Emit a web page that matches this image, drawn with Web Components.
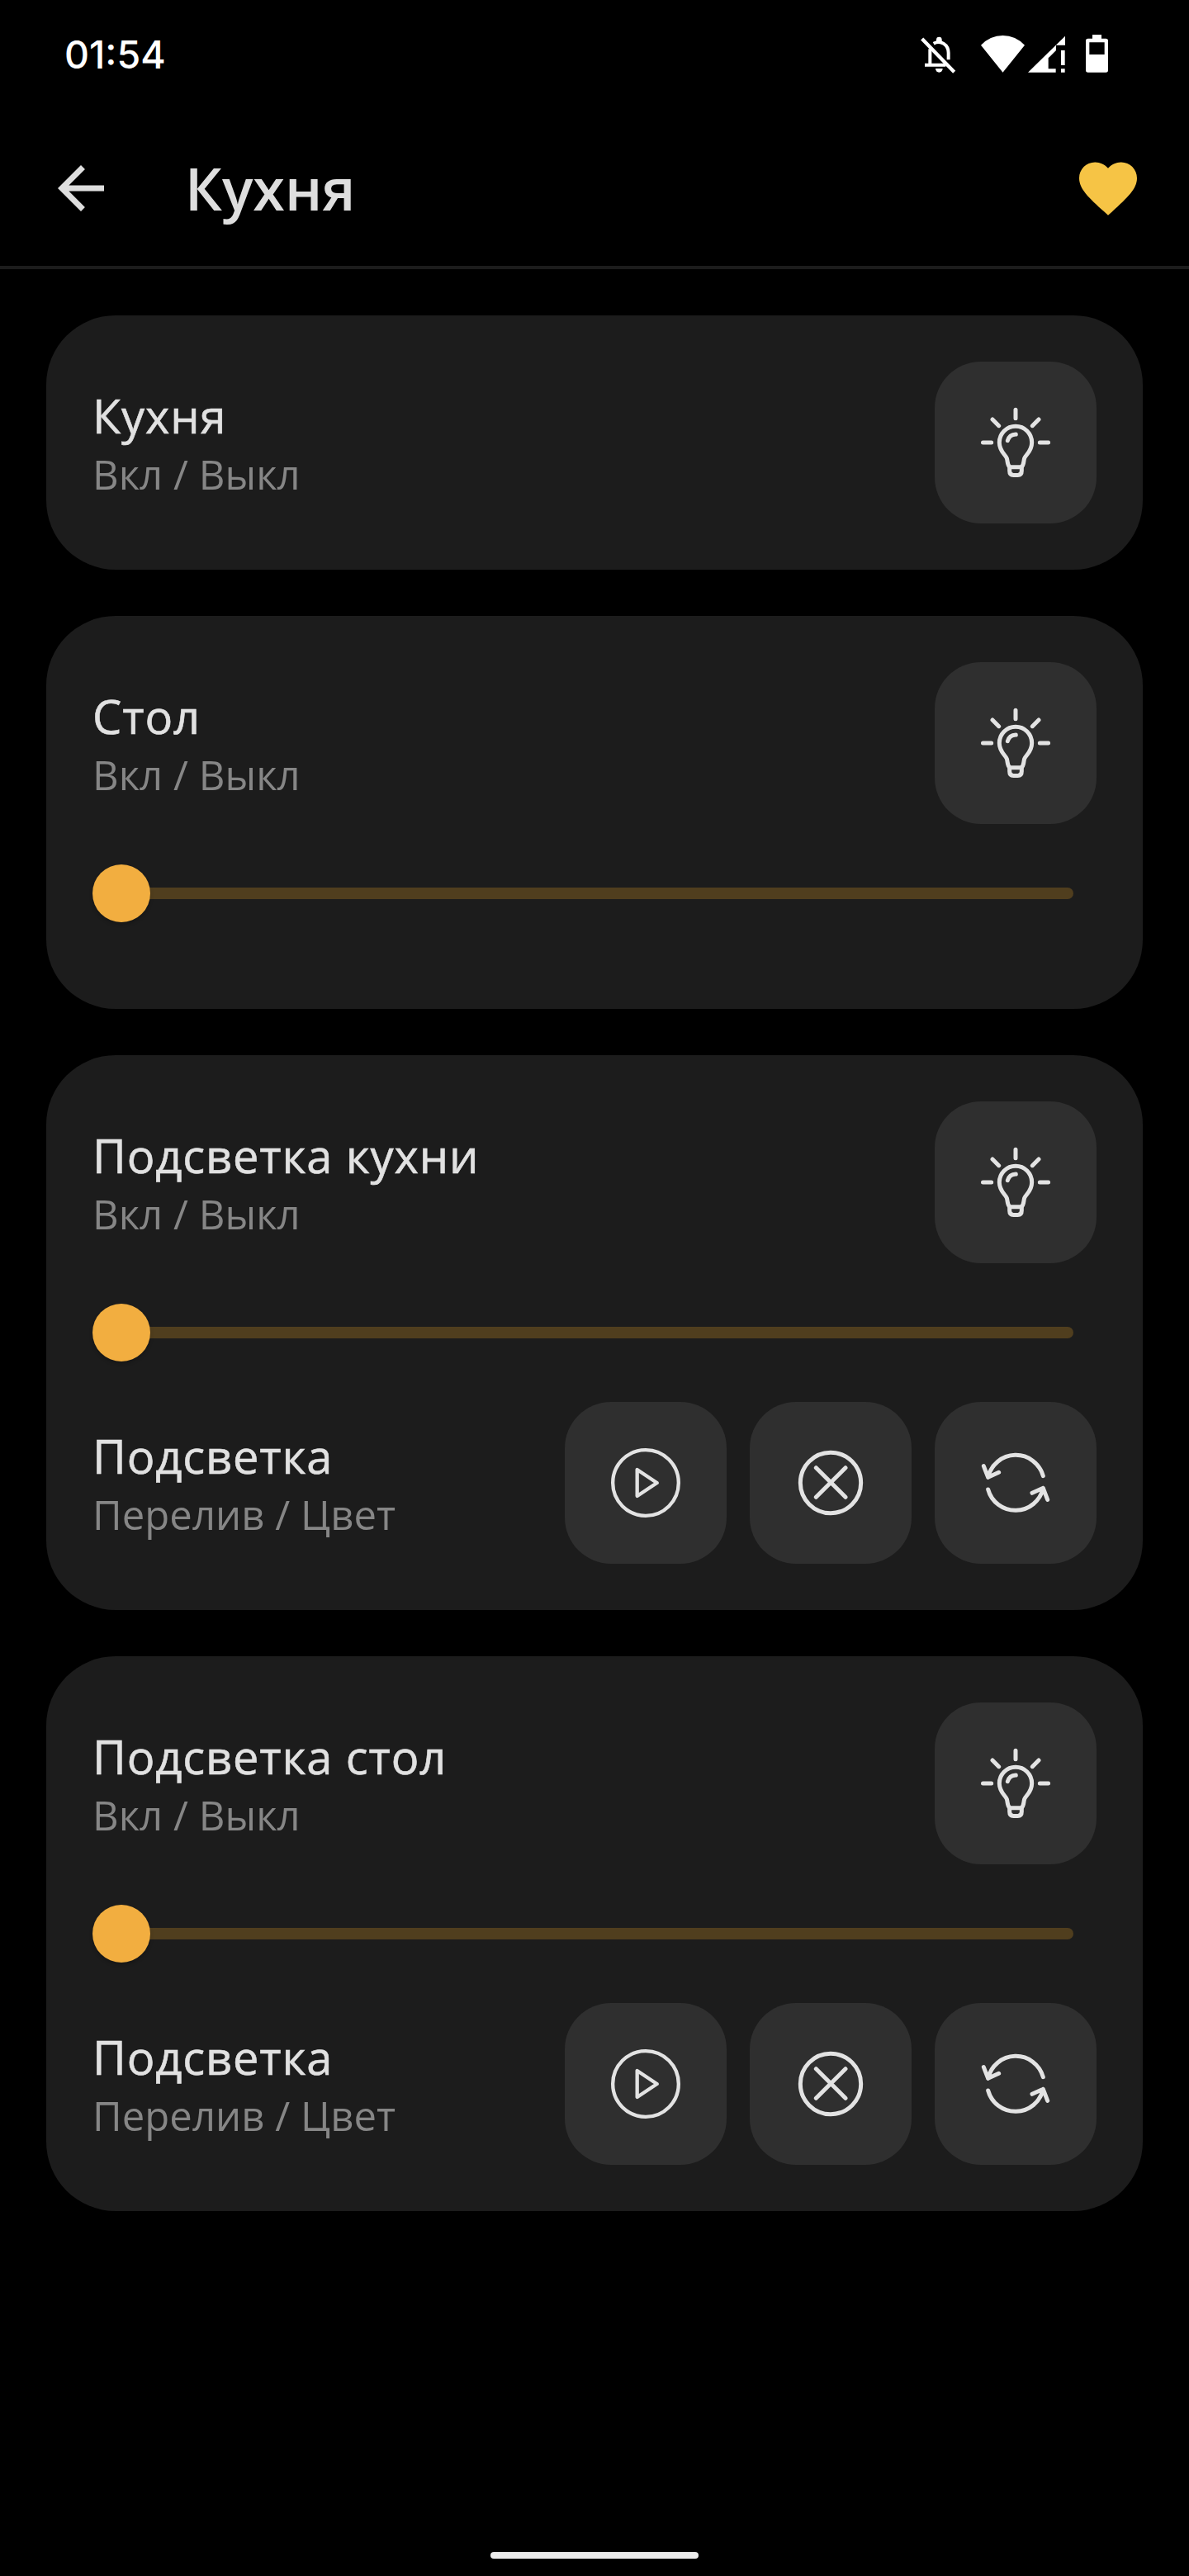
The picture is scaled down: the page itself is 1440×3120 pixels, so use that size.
<!DOCTYPE html>
<html lang="ru">
<head>
<meta charset="utf-8">
<title>Кухня</title>
<style>
  html, body { margin: 0; background: #000; }
  body { font-family: "Open Sans", "Noto Sans", sans-serif; }
</style>
</head>
<body>
<room-screen>
  <status-bar slot="status">01:54</status-bar>
  <app-header slot="header">Кухня</app-header>
  <device-card>
    <control-row label="Кухня" hint="Вкл / Выкл"><icon-button icon="bulb"></icon-button></control-row>
  </device-card>
  <device-card>
    <control-row label="Стол" hint="Вкл / Выкл"><icon-button icon="bulb"></icon-button></control-row>
    <level-slider></level-slider>
  </device-card>
  <device-card>
    <control-row label="Подсветка кухни" hint="Вкл / Выкл"><icon-button icon="bulb"></icon-button></control-row>
    <level-slider></level-slider>
    <control-row label="Подсветка" hint="Перелив / Цвет"><icon-button icon="play"></icon-button><icon-button icon="cancel"></icon-button><icon-button icon="cycle"></icon-button></control-row>
  </device-card>
  <device-card>
    <control-row label="Подсветка стол" hint="Вкл / Выкл"><icon-button icon="bulb"></icon-button></control-row>
    <level-slider></level-slider>
    <control-row label="Подсветка" hint="Перелив / Цвет"><icon-button icon="play"></icon-button><icon-button icon="cancel"></icon-button><icon-button icon="cycle"></icon-button></control-row>
  </device-card>
</room-screen>
<script>
const define = (name, render) => customElements.define(name, class extends HTMLElement {
  constructor() {
    super();
    this.attachShadow({ mode: 'open' });
  }
  connectedCallback() {
    this.shadowRoot.innerHTML = render(this);
  }
});

define('room-screen', () => `
  <style>
    :host { display: flex; flex-direction: column; width: 1440px; height: 3120px; background: #000; overflow: hidden; }
    main { display: flex; flex-direction: column; gap: 56px; padding: 56px 56px 0; flex: 1; }
    .pill { width: 252px; height: 8px; border-radius: 4px; background: #ebebeb; align-self: center; margin-bottom: 21px; }
  </style>
  <slot name="status"></slot>
  <slot name="header"></slot>
  <main><slot></slot></main>
  <div class="pill"></div>`);

define('status-bar', () => `
  <style>
    :host { display: flex; align-items: center; justify-content: space-between; height: 134px; padding: 0 98px 3px 78px; box-sizing: border-box; color: #fff; }
    .time { font: 500 46.5px/56px Inter, sans-serif; }
    .icons { display: flex; }
    svg { display: block; height: 47px; }
    .bell { width: 44px; margin-right: 30px; }
    .wifi { width: 53px; margin-right: 4px; }
    .cell { width: 45px; margin-right: 25px; }
    .battery { width: 27px; }
  </style>
  <span class="time"><slot></slot></span>
  <div class="icons">
    <svg class="bell" viewBox="102 66 132 141" fill="none" stroke="#fff" stroke-width="12">
      <path d="M110 81L227 202" stroke-width="13"/>
      <path d="M139 118V174M120 176H196" />
      <path d="M152 98C178 84 206 102 206 132V157" stroke-width="12"/>
      <path d="M162 90V84A10 10 0 0 1 182 84V94L166 98Z" fill="#fff" stroke="none"/>
      <path d="M159 189H185A13 14 0 0 1 159 189Z" fill="#fff" stroke="none"/>
    </svg>
    <svg class="wifi" viewBox="324 66 159 141" fill="#fff"><path d="M324 104Q358 69 403.500 69T483 104L403.500 203Z"/></svg>
    <svg class="cell" viewBox="495 66 135 141" fill="#fff">
      <path d="M630 71V104H597V123L569 151V190H596V203H495Z"/>
      <path d="M615 123H629V177H615ZM615 190H629V203H615Z"/>
    </svg>
    <svg class="battery" viewBox="705 66 81 141" fill="#fff"><path fill-rule="evenodd" d="M729 66H762V80H778Q786 80 786 88V195Q786 203 778 203H713Q705 203 705 195V88Q705 80 713 80H729ZM718 94V138H773V94Z"/></svg>
  </div>`);

define('app-header', () => `
  <style>
    :host { display: flex; align-items: center; height: 192px; box-sizing: border-box; padding: 0 56px; border-bottom: 4px solid #1c1c1c; color: #dedede; }
    svg { display: block; width: 84px; height: 84px; }
    h1 { flex: 1; margin: 0 0 0 84px; font-size: 70px; font-weight: 600; line-height: 96px; white-space: nowrap; }
  </style>
  <svg viewBox="0 0 24 24" fill="#dedede"><path d="M20 11H7.830l5.590-5.590L12 4l-8 8 8 8 1.410-1.410L7.830 13H20v-2z"/></svg>
  <h1><slot></slot></h1>
  <svg viewBox="0 0 24 24" fill="#f6c445"><path d="M12 21.350l-1.450-1.320C5.400 15.360 2 12.280 2 8.500 2 5.420 4.420 3 7.500 3c1.740 0 3.410.810 4.500 2.090C13.090 3.810 14.760 3 16.500 3 19.580 3 22 5.420 22 8.500c0 3.780-3.400 6.860-8.550 11.540L12 21.350z"/></svg>`);

define('device-card', () => `
  <style>
    :host { display: flex; flex-direction: column; padding: 56px; border-radius: 84px; background: #1c1c1c; }
  </style>
  <slot></slot>`);

define('control-row', (el) => `
  <style>
    :host { display: flex; align-items: center; gap: 28px; height: 196px; }
    .text { flex: 1; white-space: nowrap; }
    .label { font-size: 56px; line-height: 76px; letter-spacing: .875px; color: #e1e1e1; -webkit-text-stroke: .6px #e1e1e1; }
    .hint { font-size: 49px; line-height: 67px; letter-spacing: .06px; color: #868686; }
  </style>
  <div class="text">
    <div class="label">${el.getAttribute('label')}</div>
    <div class="hint">${el.getAttribute('hint')}</div>
  </div>
  <slot></slot>`);

define('level-slider', () => `
  <style>
    :host { display: flex; align-items: center; height: 168px; padding-right: 28px; }
    .thumb { width: 70px; height: 70px; border-radius: 50%; background: #f2ae40; box-shadow: 0 3px 4px rgba(0,0,0,.2); z-index: 1; }
    .track { flex: 1; height: 14px; border-radius: 0 7px 7px 0; background: #503e1e; margin-left: -4px; }
  </style>
  <div class="thumb"></div><div class="track"></div>`);

const icons = {
  bulb: `<g stroke-width="15">
    <path d="M360 229V260M241.500 348H272M448 348H479M276 264L299 287M444 264L421 287"/>
    <path d="M339 437C329 430 332 418 328 405C323 391 301 381 301 348A59 59 0 0 1 419 348C419 381 397 391 392 405C388 418 391 430 381 437Z"/>
    <path d="M338 437V451Q338 466.500 352 466.500H368Q382 466.500 382 451V437"/>
    <path d="M331 341Q337 319 361 318"/></g>`,
  play: `<g stroke-width="13"><circle cx="360" cy="348" r="119.500"/><path d="M329 300V396L401 348Z"/></g>`,
  cancel: `<circle cx="360" cy="348" r="110" stroke-width="15"/><path d="M307 293L414 400M414 293L307 400" stroke-width="15"/>`,
  cycle: `<g stroke-width="15">
    <path d="M260 328A103 103 0 0 1 460 323M244 287L260 328L299 310"/>
    <path d="M260 372A103 103 0 0 0 460 367M420 385L460 367L476 409"/></g>`
};

define('icon-button', (el) => `
  <style>
    :host { display: flex; align-items: center; justify-content: center; flex: none; width: 196px; height: 196px; border-radius: 56px; background: #2f2f2f; }
    svg { display: block; width: 84px; height: 84px; overflow: visible; }
  </style>
  <svg viewBox="234 222 252 252" fill="none" stroke="#e3e3e3" stroke-linecap="round" stroke-linejoin="round">${icons[el.getAttribute('icon')]}</svg>`);
</script>
</body>
</html>
